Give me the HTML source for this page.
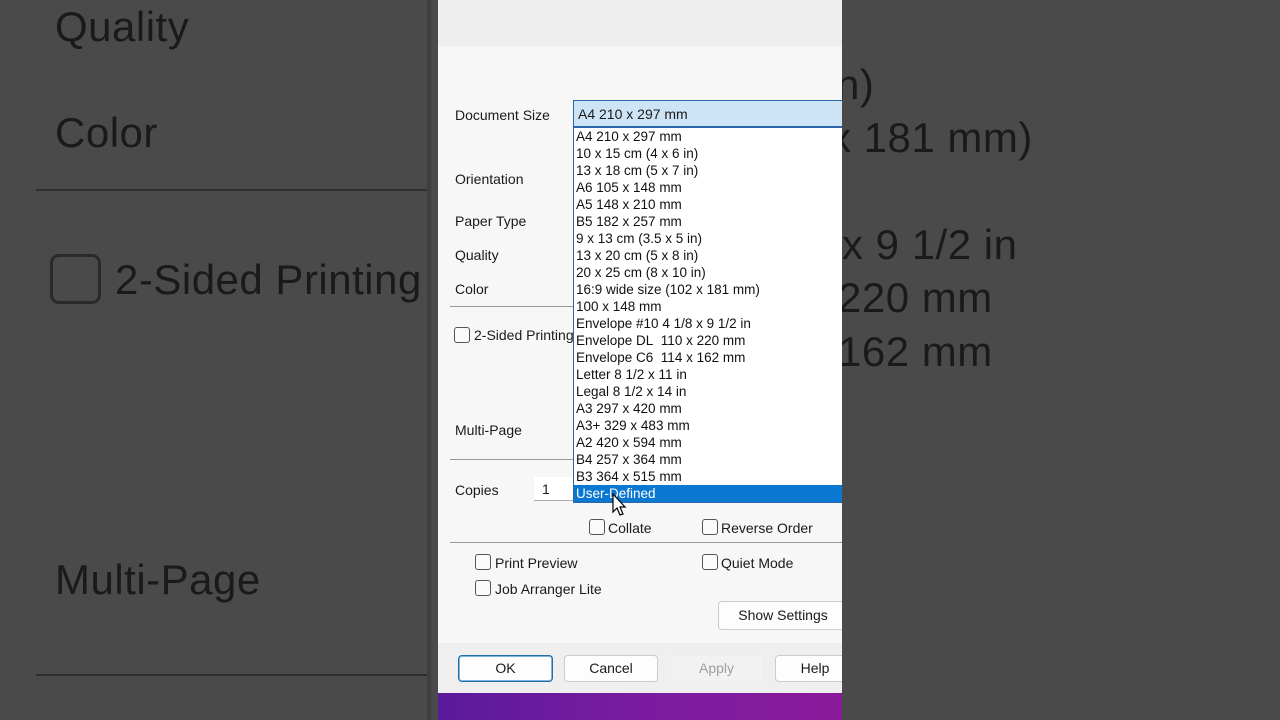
<!DOCTYPE html>
<html><head><meta charset="utf-8"><style>
*{margin:0;padding:0;box-sizing:border-box}
body{width:1280px;height:720px;overflow:hidden;background:#4a4a4a;position:relative;font-family:"Liberation Sans","DejaVu Sans",sans-serif}
.a{position:absolute;white-space:nowrap}
.big{font-size:42px;color:#1a1a1a;letter-spacing:0.5px}
.dlg{position:absolute;left:438px;top:0;width:404px;height:693px;background:#f7f7f7;overflow:hidden}
.s{font-size:14px;color:#1a1a1a}
.cb{position:absolute;width:16px;height:16px;border:1px solid #555;border-radius:3px;background:#fafafa}
.btn{position:absolute;height:27px;border:1px solid #ccc;border-radius:4px;background:#fdfdfd;font-size:14px;text-align:center;line-height:25px;color:#1a1a1a}
.list{position:absolute;left:135px;top:127px;width:280px;height:376px;background:#fff;border:1px solid #2a66a8;border-right:none}
.list div{height:17px;line-height:17px;font-size:13.5px;color:#111;padding-left:2px}
</style></head><body>
<div class="a big" style="left:55px;top:3px">Quality</div>
<div class="a big" style="left:55px;top:109px">Color</div>
<div class="a" style="left:36px;top:189px;width:392px;height:2px;background:#2e2e2e"></div>
<div class="a" style="left:50px;top:254px;width:51px;height:50px;border:3px solid #2a2a2a;border-radius:9px"></div>
<div class="a big" style="left:115px;top:256px">2-Sided Printing</div>
<div class="a big" style="left:55px;top:556px">Multi-Page</div>
<div class="a" style="left:36px;top:674px;width:392px;height:2px;background:#2e2e2e"></div>
<div class="a" style="left:427px;top:0;width:4px;height:720px;background:#3c3f40"></div>
<div class="a big" style="left:836px;top:61px">n)</div>
<div class="a big" style="left:830px;top:114px">x 181 mm)</div>
<div class="a big" style="left:842px;top:221px">x 9 1/2 in</div>
<div class="a big" style="left:838px;top:274px">220 mm</div>
<div class="a big" style="left:838px;top:328px">162 mm</div>
<div class="a" style="left:438px;top:693px;width:404px;height:27px;background:linear-gradient(90deg,#5a1a9a,#7a1ca0,#8a1a9a)"></div>
<div class="dlg">
<div class="a" style="left:0;top:0;width:404px;height:46px;background:#eeeeee"></div>
<div class="a s" style="left:17px;top:107px">Document Size</div>
<div class="a s" style="left:17px;top:171px">Orientation</div>
<div class="a s" style="left:17px;top:213px">Paper Type</div>
<div class="a s" style="left:17px;top:247px">Quality</div>
<div class="a s" style="left:17px;top:281px">Color</div>
<div class="a" style="left:12px;top:306px;width:125px;height:1px;background:#999"></div>
<div class="cb" style="left:16px;top:327px"></div>
<div class="a s" style="left:36px;top:327px">2-Sided Printing</div>
<div class="a s" style="left:17px;top:422px">Multi-Page</div>
<div class="a" style="left:12px;top:459px;width:125px;height:1px;background:#999"></div>
<div class="a s" style="left:17px;top:482px">Copies</div>
<div class="a" style="left:96px;top:477px;width:40px;height:24px;background:#fff;border-bottom:1px solid #aaa"></div>
<div class="a s" style="left:104px;top:481px">1</div>
<div class="a" style="left:135px;top:100px;width:280px;height:27px;background:#cce4f6;border:1px solid #2a66a8"></div>
<div class="a s" style="left:140px;top:106px">A4 210 x 297 mm</div>
<div class="list">
<div>A4 210 x 297 mm</div><div>10 x 15 cm (4 x 6 in)</div><div>13 x 18 cm (5 x 7 in)</div><div>A6 105 x 148 mm</div><div>A5 148 x 210 mm</div><div>B5 182 x 257 mm</div><div>9 x 13 cm (3.5 x 5 in)</div><div>13 x 20 cm (5 x 8 in)</div><div>20 x 25 cm (8 x 10 in)</div><div>16:9 wide size (102 x 181 mm)</div><div>100 x 148 mm</div><div>Envelope #10 4 1/8 x 9 1/2 in</div><div>Envelope DL&nbsp; 110 x 220 mm</div><div>Envelope C6&nbsp; 114 x 162 mm</div><div>Letter 8 1/2 x 11 in</div><div>Legal 8 1/2 x 14 in</div><div>A3 297 x 420 mm</div><div>A3+ 329 x 483 mm</div><div>A2 420 x 594 mm</div><div>B4 257 x 364 mm</div><div>B3 364 x 515 mm</div><div style="background:#0a78d0;color:#fff">User-Defined</div>
</div>
<svg class="a" style="left:174px;top:493px" width="16" height="26" viewBox="0 0 16 26"><path d="M1 1 L1 19 L5 15 L8 22 L11 21 L8 14 L13 14 Z" fill="#fff" stroke="#000" stroke-width="1.2"/></svg>
<div class="cb" style="left:151px;top:519px"></div>
<div class="a s" style="left:170px;top:520px">Collate</div>
<div class="cb" style="left:264px;top:519px"></div>
<div class="a s" style="left:283px;top:520px">Reverse Order</div>
<div class="a" style="left:12px;top:542px;width:392px;height:1px;background:#999"></div>
<div class="cb" style="left:37px;top:554px"></div>
<div class="a s" style="left:57px;top:555px">Print Preview</div>
<div class="cb" style="left:264px;top:554px"></div>
<div class="a s" style="left:283px;top:555px">Quiet Mode</div>
<div class="cb" style="left:37px;top:580px"></div>
<div class="a s" style="left:57px;top:581px">Job Arranger Lite</div>
<div class="btn" style="left:280px;top:601px;width:130px;height:29px;line-height:27px">Show Settings</div>
<div class="a" style="left:0;top:643px;width:404px;height:50px;background:#efefef"></div>
<div class="btn" style="left:20px;top:655px;width:95px;border:1px solid #1f6fa8;box-shadow:inset 0 0 0 1px #7fb3d8">OK</div>
<div class="btn" style="left:126px;top:655px;width:94px">Cancel</div>
<div class="btn" style="left:232px;top:655px;width:93px;background:#f2f2f2;border-color:#eee;color:#a0a0a0">Apply</div>
<div class="btn" style="left:337px;top:655px;width:80px">Help</div>
</div>
</body></html>
